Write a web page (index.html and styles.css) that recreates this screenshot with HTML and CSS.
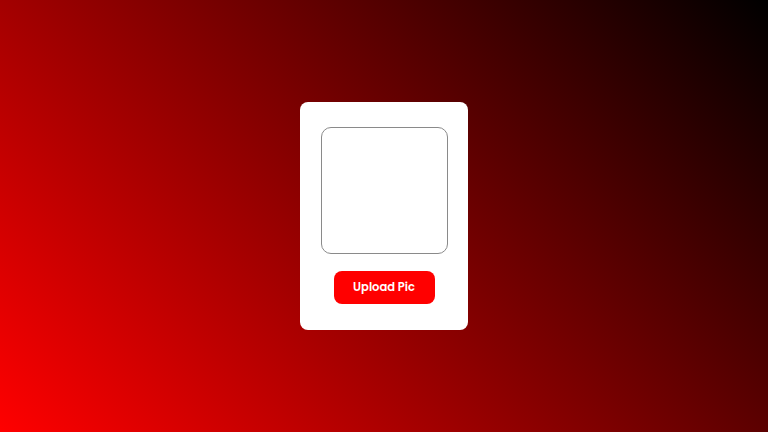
FILE: index.html
```html
<!DOCTYPE html>
<html>
<head>
<meta charset="utf-8">
<link rel="stylesheet" href="styles.css">
</head>
<body>
<main class="page">
  <div class="card">
    <div class="preview"></div>
    <button class="upload">Upload Pic</button>
  </div>
</main>
</body>
</html>
```
FILE: styles.css
```css
html, body {
  margin: 0;
  padding: 0;
  height: 100%;
}
body {
  font-family: Poppins, Inter, "Open Sans", sans-serif;
  background: linear-gradient(45deg, #ff0000 0%, #000000 100%);
}
.page {
  height: 432px;
  display: flex;
  align-items: center;
  justify-content: center;
}
.card {
  box-sizing: border-box;
  width: 168px;
  height: 228px;
  background: #ffffff;
  border-radius: 8px;
  padding-top: 25px;
  display: flex;
  flex-direction: column;
  align-items: center;
}
.preview {
  box-sizing: border-box;
  width: 127px;
  height: 127px;
  border: 1px solid #8a8a8a;
  border-radius: 10px;
}
.upload {
  margin-top: 17px;
  width: 101px;
  height: 33px;
  border: none;
  border-radius: 8px;
  background: #ff0000;
  color: #ffffff;
  font-family: Poppins, Inter, "Open Sans", sans-serif;
  font-weight: 600;
  font-size: 11.5px;
  padding: 0;
}
```
